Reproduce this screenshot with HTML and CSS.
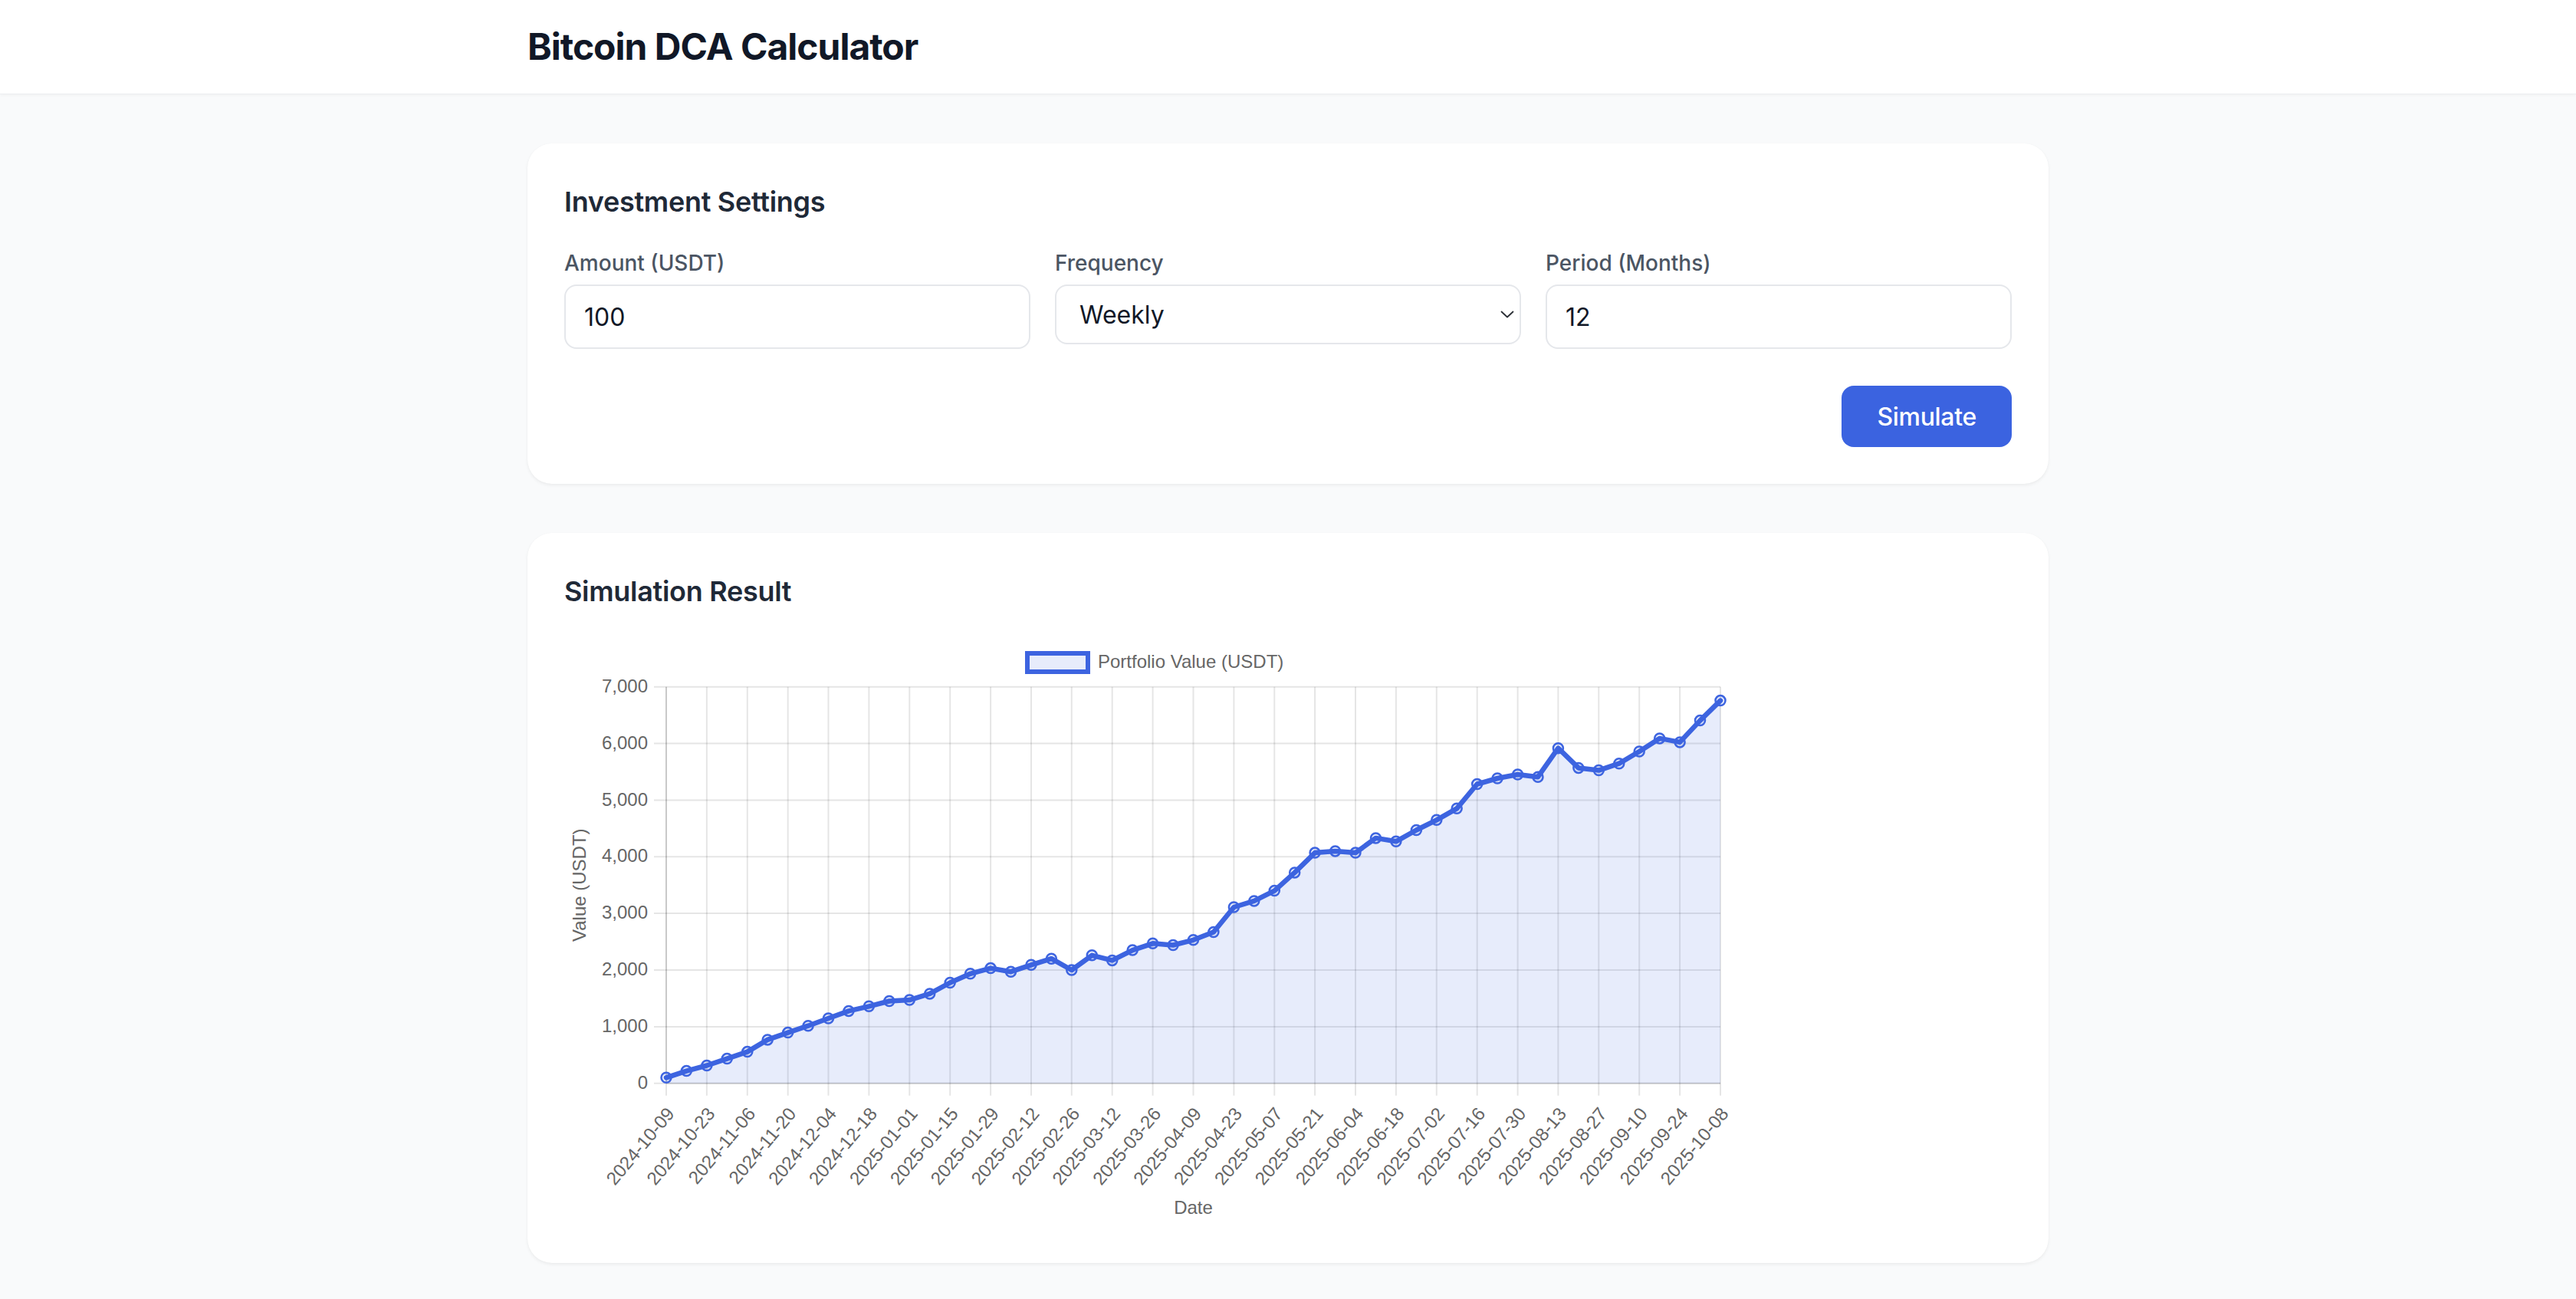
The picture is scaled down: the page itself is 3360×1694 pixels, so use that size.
FILE: index.html
```html
<!DOCTYPE html>
<html lang="en">
<head>
<meta charset="utf-8">
<title>Bitcoin DCA Calculator</title>
<link rel="stylesheet" href="styles.css">
</head>
<body>
<header class="header">
  <div class="container">
    <h1 class="title">Bitcoin DCA Calculator</h1>
  </div>
</header>
<main class="main container">
  <section class="card">
    <h2 class="card-title">Investment Settings</h2>
    <div class="form-grid">
      <div class="field">
        <label class="label">Amount (USDT)</label>
        <input class="input" type="text" value="100">
      </div>
      <div class="field">
        <label class="label">Frequency</label>
        <div class="select-wrap">
          <select class="select"><option>Weekly</option><option>Daily</option><option>Monthly</option></select>
          <svg class="chevron" width="18" height="10" viewBox="0 0 18 10"><path d="M1.5 1.5 L9 8.5 L16.5 1.5" fill="none" stroke="#2b2f36" stroke-width="1.8" stroke-linecap="round" stroke-linejoin="round"/></svg>
        </div>
      </div>
      <div class="field">
        <label class="label">Period (Months)</label>
        <input class="input" type="text" value="12">
      </div>
    </div>
    <div class="actions">
      <button class="btn" type="button">Simulate</button>
    </div>
  </section>

  <section class="card">
    <h2 class="card-title">Simulation Result</h2>
    <div class="chart">
      <svg class="chart-svg" width="1536" height="768" viewBox="0 0 1536 768">
        <!-- legend -->
        <rect x="604" y="21" width="79" height="24" fill="rgba(61,100,224,0.12)" stroke="#3d64e0" stroke-width="6"/>
        <text class="t" x="696" y="34" dominant-baseline="middle">Portfolio Value (USDT)</text>

        <!-- horizontal grid -->
        <g stroke="rgba(0,0,0,0.1)" stroke-width="2">
          <line x1="117" y1="64.7" x2="1508" y2="64.7"/>
          <line x1="117" y1="138.6" x2="1508" y2="138.6"/>
          <line x1="117" y1="212.4" x2="1508" y2="212.4"/>
          <line x1="117" y1="286.3" x2="1508" y2="286.3"/>
          <line x1="117" y1="360.1" x2="1508" y2="360.1"/>
          <line x1="117" y1="434.0" x2="1508" y2="434.0"/>
          <line x1="117" y1="507.9" x2="1508" y2="507.9"/>
          <line x1="117" y1="581.7" x2="1508" y2="581.7"/>
        </g>
        <!-- vertical grid -->
        <g stroke="rgba(0,0,0,0.1)" stroke-width="2">
          <line x1="133.0" y1="64.7" x2="133.0" y2="597.7"/>
          <line x1="185.9" y1="64.7" x2="185.9" y2="597.7"/>
          <line x1="238.8" y1="64.7" x2="238.8" y2="597.7"/>
          <line x1="291.7" y1="64.7" x2="291.7" y2="597.7"/>
          <line x1="344.5" y1="64.7" x2="344.5" y2="597.7"/>
          <line x1="397.4" y1="64.7" x2="397.4" y2="597.7"/>
          <line x1="450.3" y1="64.7" x2="450.3" y2="597.7"/>
          <line x1="503.2" y1="64.7" x2="503.2" y2="597.7"/>
          <line x1="556.1" y1="64.7" x2="556.1" y2="597.7"/>
          <line x1="609.0" y1="64.7" x2="609.0" y2="597.7"/>
          <line x1="661.8" y1="64.7" x2="661.8" y2="597.7"/>
          <line x1="714.7" y1="64.7" x2="714.7" y2="597.7"/>
          <line x1="767.6" y1="64.7" x2="767.6" y2="597.7"/>
          <line x1="820.5" y1="64.7" x2="820.5" y2="597.7"/>
          <line x1="873.4" y1="64.7" x2="873.4" y2="597.7"/>
          <line x1="926.3" y1="64.7" x2="926.3" y2="597.7"/>
          <line x1="979.1" y1="64.7" x2="979.1" y2="597.7"/>
          <line x1="1032.0" y1="64.7" x2="1032.0" y2="597.7"/>
          <line x1="1084.9" y1="64.7" x2="1084.9" y2="597.7"/>
          <line x1="1137.8" y1="64.7" x2="1137.8" y2="597.7"/>
          <line x1="1190.7" y1="64.7" x2="1190.7" y2="597.7"/>
          <line x1="1243.6" y1="64.7" x2="1243.6" y2="597.7"/>
          <line x1="1296.4" y1="64.7" x2="1296.4" y2="597.7"/>
          <line x1="1349.3" y1="64.7" x2="1349.3" y2="597.7"/>
          <line x1="1402.2" y1="64.7" x2="1402.2" y2="597.7"/>
          <line x1="1455.1" y1="64.7" x2="1455.1" y2="597.7"/>
          <line x1="1508.0" y1="64.7" x2="1508.0" y2="597.7"/>
        </g>
        <!-- axis borders -->
        <g stroke="rgba(0,0,0,0.12)" stroke-width="2">
          <line x1="133" y1="64.7" x2="133" y2="581.7"/>
          <line x1="133" y1="581.7" x2="1508" y2="581.7"/>
        </g>

        <!-- area fill -->
        <polygon fill="rgba(61,100,224,0.12)" points="133.0,581.7 133.0,574.3 159.4,565.6 185.9,558.5 212.3,549.6 238.8,540.6 265.2,524.9 291.7,515.6 318.1,506.7 344.5,497.0 371.0,487.4 397.4,481.3 423.9,474.5 450.3,473.1 476.7,464.9 503.2,450.5 529.6,438.8 556.1,431.6 582.5,436.2 609.0,427.3 635.4,419.2 661.8,434.0 688.3,414.8 714.7,421.4 741.2,408.1 767.6,399.3 794.1,401.5 820.5,394.8 846.9,384.5 873.4,352.0 899.8,343.9 926.3,330.6 952.7,306.9 979.1,281.1 1005.6,278.9 1032.0,281.1 1058.5,261.9 1084.9,266.3 1111.4,251.5 1137.8,238.3 1164.2,223.3 1190.7,191.5 1217.1,184.0 1243.6,179.0 1270.0,182.2 1296.4,144.7 1322.9,170.4 1349.3,173.6 1375.8,164.7 1402.2,149.0 1428.7,131.9 1455.1,136.9 1481.5,108.6 1508.0,82.6 1508.0,581.7"/>

        <!-- line -->
        <polyline fill="none" stroke="#3d64e0" stroke-width="6.5" stroke-linejoin="round" stroke-linecap="round" points="133.0,574.3 159.4,565.6 185.9,558.5 212.3,549.6 238.8,540.6 265.2,524.9 291.7,515.6 318.1,506.7 344.5,497.0 371.0,487.4 397.4,481.3 423.9,474.5 450.3,473.1 476.7,464.9 503.2,450.5 529.6,438.8 556.1,431.6 582.5,436.2 609.0,427.3 635.4,419.2 661.8,434.0 688.3,414.8 714.7,421.4 741.2,408.1 767.6,399.3 794.1,401.5 820.5,394.8 846.9,384.5 873.4,352.0 899.8,343.9 926.3,330.6 952.7,306.9 979.1,281.1 1005.6,278.9 1032.0,281.1 1058.5,261.9 1084.9,266.3 1111.4,251.5 1137.8,238.3 1164.2,223.3 1190.7,191.5 1217.1,184.0 1243.6,179.0 1270.0,182.2 1296.4,144.7 1322.9,170.4 1349.3,173.6 1375.8,164.7 1402.2,149.0 1428.7,131.9 1455.1,136.9 1481.5,108.6 1508.0,82.6"/>

        <!-- points -->
        <g fill="rgba(61,100,224,0.12)" stroke="#3d64e0" stroke-width="2.5">
          <circle cx="133.0" cy="574.3" r="6.5"/><circle cx="159.4" cy="565.6" r="6.5"/><circle cx="185.9" cy="558.5" r="6.5"/><circle cx="212.3" cy="549.6" r="6.5"/><circle cx="238.8" cy="540.6" r="6.5"/><circle cx="265.2" cy="524.9" r="6.5"/><circle cx="291.7" cy="515.6" r="6.5"/><circle cx="318.1" cy="506.7" r="6.5"/><circle cx="344.5" cy="497.0" r="6.5"/><circle cx="371.0" cy="487.4" r="6.5"/><circle cx="397.4" cy="481.3" r="6.5"/><circle cx="423.9" cy="474.5" r="6.5"/><circle cx="450.3" cy="473.1" r="6.5"/><circle cx="476.7" cy="464.9" r="6.5"/><circle cx="503.2" cy="450.5" r="6.5"/><circle cx="529.6" cy="438.8" r="6.5"/><circle cx="556.1" cy="431.6" r="6.5"/><circle cx="582.5" cy="436.2" r="6.5"/><circle cx="609.0" cy="427.3" r="6.5"/><circle cx="635.4" cy="419.2" r="6.5"/><circle cx="661.8" cy="434.0" r="6.5"/><circle cx="688.3" cy="414.8" r="6.5"/><circle cx="714.7" cy="421.4" r="6.5"/><circle cx="741.2" cy="408.1" r="6.5"/><circle cx="767.6" cy="399.3" r="6.5"/><circle cx="794.1" cy="401.5" r="6.5"/><circle cx="820.5" cy="394.8" r="6.5"/><circle cx="846.9" cy="384.5" r="6.5"/><circle cx="873.4" cy="352.0" r="6.5"/><circle cx="899.8" cy="343.9" r="6.5"/><circle cx="926.3" cy="330.6" r="6.5"/><circle cx="952.7" cy="306.9" r="6.5"/><circle cx="979.1" cy="281.1" r="6.5"/><circle cx="1005.6" cy="278.9" r="6.5"/><circle cx="1032.0" cy="281.1" r="6.5"/><circle cx="1058.5" cy="261.9" r="6.5"/><circle cx="1084.9" cy="266.3" r="6.5"/><circle cx="1111.4" cy="251.5" r="6.5"/><circle cx="1137.8" cy="238.3" r="6.5"/><circle cx="1164.2" cy="223.3" r="6.5"/><circle cx="1190.7" cy="191.5" r="6.5"/><circle cx="1217.1" cy="184.0" r="6.5"/><circle cx="1243.6" cy="179.0" r="6.5"/><circle cx="1270.0" cy="182.2" r="6.5"/><circle cx="1296.4" cy="144.7" r="6.5"/><circle cx="1322.9" cy="170.4" r="6.5"/><circle cx="1349.3" cy="173.6" r="6.5"/><circle cx="1375.8" cy="164.7" r="6.5"/><circle cx="1402.2" cy="149.0" r="6.5"/><circle cx="1428.7" cy="131.9" r="6.5"/><circle cx="1455.1" cy="136.9" r="6.5"/><circle cx="1481.5" cy="108.6" r="6.5"/><circle cx="1508.0" cy="82.6" r="6.5"/>
        </g>

        <!-- y tick labels -->
        <g class="t" text-anchor="end" dominant-baseline="middle">
          <text x="109" y="65.5">7,000</text>
          <text x="109" y="139.4">6,000</text>
          <text x="109" y="213.2">5,000</text>
          <text x="109" y="287.1">4,000</text>
          <text x="109" y="360.9">3,000</text>
          <text x="109" y="434.8">2,000</text>
          <text x="109" y="508.7">1,000</text>
          <text x="109" y="582.5">0</text>
        </g>

        <!-- y axis title -->
        <text class="t" text-anchor="middle" dominant-baseline="middle" transform="translate(22 323.2) rotate(-90)">Value (USDT)</text>

        <!-- x tick labels -->
        <g class="t" text-anchor="end" dominant-baseline="middle">
          <text transform="translate(140 618) rotate(-50)">2024-10-09</text>
          <text transform="translate(192.9 618) rotate(-50)">2024-10-23</text>
          <text transform="translate(245.8 618) rotate(-50)">2024-11-06</text>
          <text transform="translate(298.7 618) rotate(-50)">2024-11-20</text>
          <text transform="translate(351.5 618) rotate(-50)">2024-12-04</text>
          <text transform="translate(404.4 618) rotate(-50)">2024-12-18</text>
          <text transform="translate(457.3 618) rotate(-50)">2025-01-01</text>
          <text transform="translate(510.2 618) rotate(-50)">2025-01-15</text>
          <text transform="translate(563.1 618) rotate(-50)">2025-01-29</text>
          <text transform="translate(616.0 618) rotate(-50)">2025-02-12</text>
          <text transform="translate(668.8 618) rotate(-50)">2025-02-26</text>
          <text transform="translate(721.7 618) rotate(-50)">2025-03-12</text>
          <text transform="translate(774.6 618) rotate(-50)">2025-03-26</text>
          <text transform="translate(827.5 618) rotate(-50)">2025-04-09</text>
          <text transform="translate(880.4 618) rotate(-50)">2025-04-23</text>
          <text transform="translate(933.3 618) rotate(-50)">2025-05-07</text>
          <text transform="translate(986.1 618) rotate(-50)">2025-05-21</text>
          <text transform="translate(1039.0 618) rotate(-50)">2025-06-04</text>
          <text transform="translate(1091.9 618) rotate(-50)">2025-06-18</text>
          <text transform="translate(1144.8 618) rotate(-50)">2025-07-02</text>
          <text transform="translate(1197.7 618) rotate(-50)">2025-07-16</text>
          <text transform="translate(1250.6 618) rotate(-50)">2025-07-30</text>
          <text transform="translate(1303.4 618) rotate(-50)">2025-08-13</text>
          <text transform="translate(1356.3 618) rotate(-50)">2025-08-27</text>
          <text transform="translate(1409.2 618) rotate(-50)">2025-09-10</text>
          <text transform="translate(1462.1 618) rotate(-50)">2025-09-24</text>
          <text transform="translate(1515.0 618) rotate(-50)">2025-10-08</text>
        </g>

        <!-- x axis title -->
        <text class="t" x="820.5" y="746" text-anchor="middle" dominant-baseline="middle">Date</text>
      </svg>
    </div>
  </section>
</main>
</body>
</html>
```

FILE: styles.css
```css
* {
  box-sizing: border-box;
}

html, body {
  margin: 0;
  padding: 0;
}

body {
  background: #f9fafb;
  font-family: Inter, "Noto Sans", "Liberation Sans", sans-serif;
  color: #111827;
}

.container {
  max-width: 2048px;
  margin: 0 auto;
  padding: 0 32px;
}

.header {
  background: #ffffff;
  border-bottom: 1px solid #eceef1;
  box-shadow: 0 2px 4px rgba(0, 0, 0, 0.03);
}

.header .container {
  padding-top: 29px;
  padding-bottom: 29px;
}

.title {
  margin: 0;
  font-size: 48px;
  line-height: 64px;
  font-weight: 700;
  color: #111827;
  letter-spacing: -1px;
}

.main {
  padding-top: 64px;
  padding-bottom: 64px;
  display: flex;
  flex-direction: column;
  gap: 64px;
}

.card {
  background: #ffffff;
  border-radius: 32px;
  padding: 48px;
  box-shadow: 0 2px 4px rgba(0, 0, 0, 0.06), 0 0 1px rgba(0, 0, 0, 0.04);
}

.card-title {
  margin: 0 0 32px 0;
  font-size: 36px;
  line-height: 56px;
  font-weight: 600;
  color: #1f2937;
  letter-spacing: -0.3px;
}

.form-grid {
  display: grid;
  grid-template-columns: repeat(3, 1fr);
  gap: 32px;
}

.label {
  display: block;
  font-size: 28px;
  line-height: 40px;
  font-weight: 500;
  color: #4b5563;
  margin-bottom: 8px;
}

.input {
  display: block;
  width: 100%;
  height: 84px;
  border: 2px solid #e5e7eb;
  border-radius: 16px;
  padding: 0 24px;
  font-family: Inter, "Noto Sans", sans-serif;
  font-size: 32px;
  color: #111827;
  background: #ffffff;
  outline: none;
}

.select-wrap {
  position: relative;
}

.select {
  display: block;
  width: 100%;
  height: 78px;
  border: 2px solid #e5e7eb;
  border-radius: 16px;
  padding: 0 30px;
  font-family: Inter, "Noto Sans", sans-serif;
  font-size: 32px;
  color: #111827;
  background: #ffffff;
  -webkit-appearance: none;
  appearance: none;
  outline: none;
}

.chevron {
  position: absolute;
  right: 9px;
  top: 34px;
  pointer-events: none;
}

.actions {
  display: flex;
  justify-content: flex-end;
  margin-top: 48px;
}

.btn {
  height: 80px;
  padding: 0 46px;
  border: none;
  border-radius: 16px;
  background: #3b63e0;
  color: #ffffff;
  font-family: Inter, "Noto Sans", sans-serif;
  font-size: 32px;
  font-weight: 500;
  letter-spacing: -0.3px;
  cursor: pointer;
}

.chart {
  width: 1536px;
  height: 768px;
}

.chart-svg {
  display: block;
}

.t {
  font-family: "Liberation Sans", Arial, sans-serif;
  font-size: 24px;
  fill: #666666;
}
```
